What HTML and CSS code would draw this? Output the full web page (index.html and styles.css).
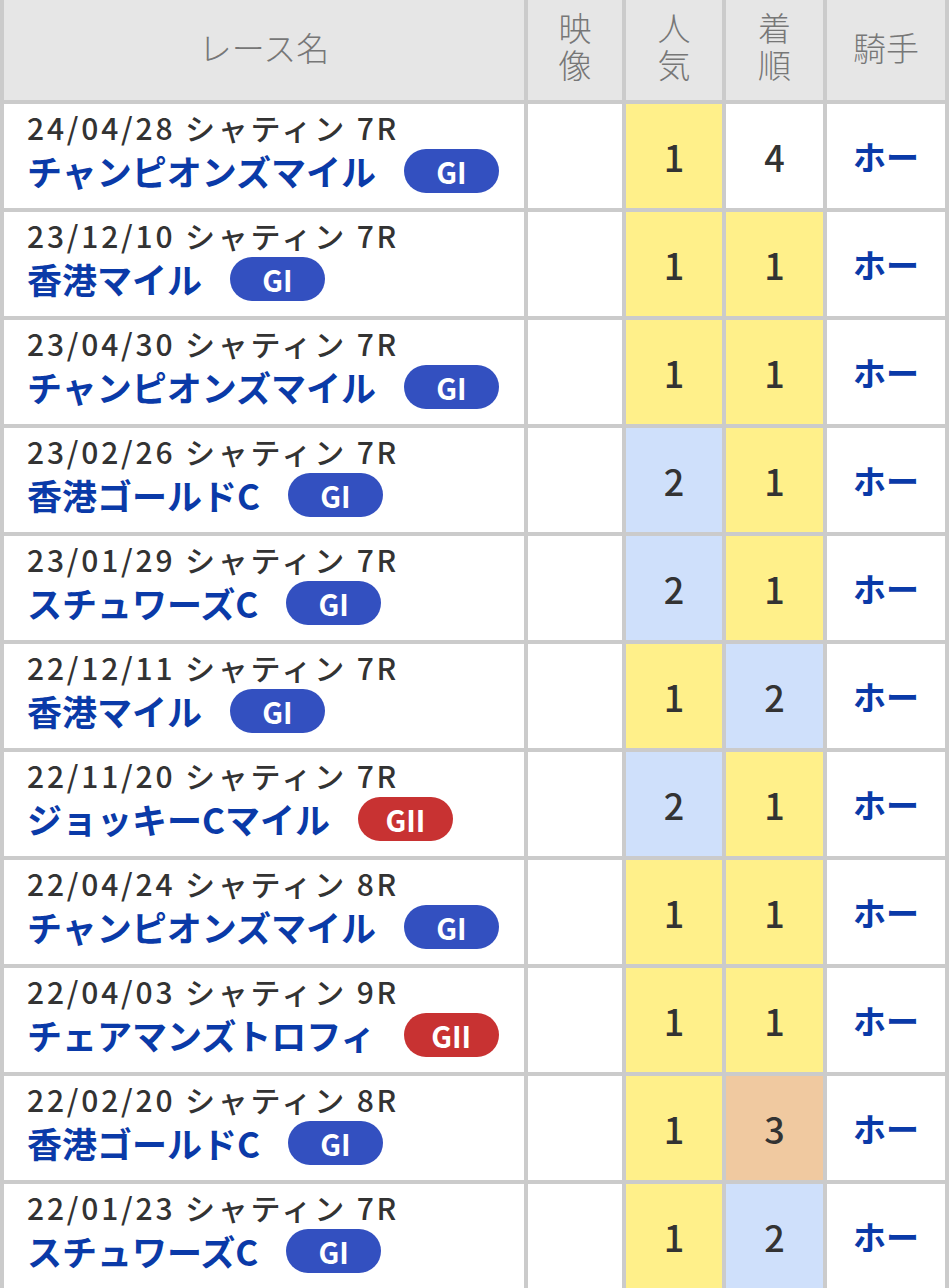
FILE: index.html
```html
<!DOCTYPE html>
<html lang="ja">
<head>
<meta charset="utf-8">
<link rel="stylesheet" href="styles.css">
</head>
<body>
<div class="table">
  <div class="hd">レース名</div>
  <div class="hd stack"><span class="ch">映</span><span class="ch">像</span></div>
  <div class="hd stack"><span class="ch">人</span><span class="ch">気</span></div>
  <div class="hd stack"><span class="ch">着</span><span class="ch">順</span></div>
  <div class="hd">騎手</div>

  <div class="race"><div class="date">24/04/28 シャティン 7R</div><div class="rname">チャンピオンズマイル<span class="badge g1">GI</span></div></div>
  <div class="cell"></div><div class="cell num y">1</div><div class="cell num">4</div><div class="cell jockey">ホー</div>

  <div class="race"><div class="date">23/12/10 シャティン 7R</div><div class="rname">香港マイル<span class="badge g1">GI</span></div></div>
  <div class="cell"></div><div class="cell num y">1</div><div class="cell num y">1</div><div class="cell jockey">ホー</div>

  <div class="race"><div class="date">23/04/30 シャティン 7R</div><div class="rname">チャンピオンズマイル<span class="badge g1">GI</span></div></div>
  <div class="cell"></div><div class="cell num y">1</div><div class="cell num y">1</div><div class="cell jockey">ホー</div>

  <div class="race"><div class="date">23/02/26 シャティン 7R</div><div class="rname">香港ゴールドC<span class="badge g1">GI</span></div></div>
  <div class="cell"></div><div class="cell num b">2</div><div class="cell num y">1</div><div class="cell jockey">ホー</div>

  <div class="race"><div class="date">23/01/29 シャティン 7R</div><div class="rname">スチュワーズC<span class="badge g1">GI</span></div></div>
  <div class="cell"></div><div class="cell num b">2</div><div class="cell num y">1</div><div class="cell jockey">ホー</div>

  <div class="race"><div class="date">22/12/11 シャティン 7R</div><div class="rname">香港マイル<span class="badge g1">GI</span></div></div>
  <div class="cell"></div><div class="cell num y">1</div><div class="cell num b">2</div><div class="cell jockey">ホー</div>

  <div class="race"><div class="date">22/11/20 シャティン 7R</div><div class="rname">ジョッキーCマイル<span class="badge g2">GII</span></div></div>
  <div class="cell"></div><div class="cell num b">2</div><div class="cell num y">1</div><div class="cell jockey">ホー</div>

  <div class="race"><div class="date">22/04/24 シャティン 8R</div><div class="rname">チャンピオンズマイル<span class="badge g1">GI</span></div></div>
  <div class="cell"></div><div class="cell num y">1</div><div class="cell num y">1</div><div class="cell jockey">ホー</div>

  <div class="race"><div class="date">22/04/03 シャティン 9R</div><div class="rname">チェアマンズトロフィ<span class="badge g2">GII</span></div></div>
  <div class="cell"></div><div class="cell num y">1</div><div class="cell num y">1</div><div class="cell jockey">ホー</div>

  <div class="race"><div class="date">22/02/20 シャティン 8R</div><div class="rname">香港ゴールドC<span class="badge g1">GI</span></div></div>
  <div class="cell"></div><div class="cell num y">1</div><div class="cell num o">3</div><div class="cell jockey">ホー</div>

  <div class="race"><div class="date">22/01/23 シャティン 7R</div><div class="rname">スチュワーズC<span class="badge g1">GI</span></div></div>
  <div class="cell"></div><div class="cell num y">1</div><div class="cell num b">2</div><div class="cell jockey">ホー</div>
</div>
</body>
</html>
```
FILE: styles.css
```css
* { box-sizing: border-box; }
html, body { margin: 0; padding: 0; background: #fff; }
body {
  font-family: "Noto Sans CJK JP", "Noto Sans", sans-serif;
  width: 949px;
  height: 1288px;
  overflow: hidden;
}
.table {
  display: grid;
  grid-template-columns: 520px 94px 96px 97px 118px;
  grid-template-rows: 100px repeat(11, 104px);
  gap: 4px;
  padding: 0 4px;
  background: #cbcbcb;
  width: 949px;
}
.hd {
  background: #e6e6e6;
  color: #777;
  font-size: 33px;
  font-weight: 300;
  display: flex;
  align-items: center;
  justify-content: center;
  text-align: center;
  line-height: 36px;
  padding-bottom: 6px;
}
.hd.stack {
  flex-direction: column;
  padding-bottom: 8px;
}
.ch {
  display: block;
  line-height: 37px;
}
.race {
  background: #fff;
  padding: 3px 0 0 23px;
}
.date {
  font-size: 30px;
  line-height: 40px;
  color: #333;
  font-weight: 500;
  letter-spacing: 2.8px;
}
.rname {
  font-size: 35px;
  line-height: 48px;
  color: #0a3aa8;
  font-weight: 700;
  display: flex;
  align-items: center;
}
.badge {
  display: inline-flex;
  align-items: center;
  justify-content: center;
  height: 44px;
  width: 95px;
  border-radius: 22px;
  margin-left: 28px;
  color: #fff;
  font-size: 29px;
  font-weight: 700;
  line-height: 1;
}
.g1 { background: #3350c0; }
.g2 { background: #c83232; }
.cell { background: #fff; }
.num {
  display: flex;
  align-items: center;
  justify-content: center;
  font-size: 36px;
  font-weight: 500;
  color: #333;
}
.y { background: #fff08a; }
.b { background: #cfe0fb; }
.o { background: #f0c9a0; }
.jockey {
  display: flex;
  align-items: center;
  justify-content: center;
  font-size: 33px;
  font-weight: 700;
  color: #0a3aa8;
}
```
